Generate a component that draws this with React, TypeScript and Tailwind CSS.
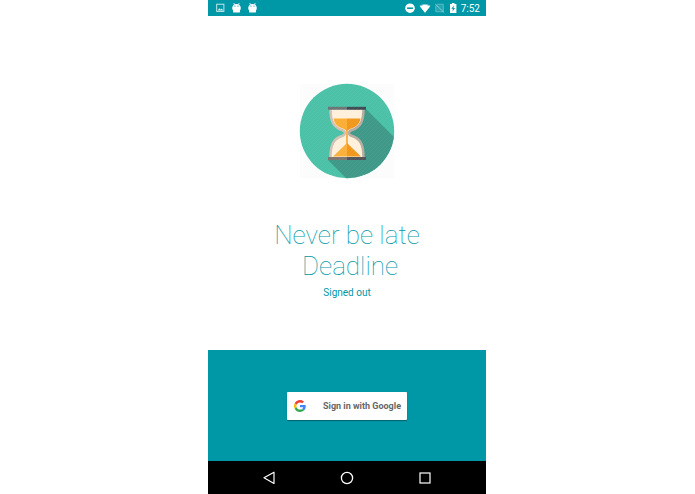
function StatusBar() {
  return (
    <header className="flex h-4 shrink-0 items-center bg-[#0097a7] pl-2 pr-1.5 text-white">
      <svg viewBox="0 0 48 12" className="h-3 w-12" aria-hidden="true">
        <rect x="0.7" y="2.2" width="7.2" height="7.2" fill="none" stroke="#d5eef1" strokeWidth="0.9" />
        <path d="M1.6 8.4L3.3 6.3L4.6 7.4L5.8 6.4L7.2 8.4Z" fill="#d5eef1" />
        {[16, 32].map((x) => (
          <g key={x} transform={`translate(${x} 0)`}>
            <path d="M1.6 1L3 2.8M7.4 1L6 2.8" stroke="#fff" strokeWidth="0.8" />
            <path
              d="M1 4.2C1 2.6 2.4 1.9 4.5 1.9C6.6 1.9 8 2.6 8 4.2L8.7 4.6V7.6L8 8V9.4C8 10.2 7.5 10.6 6.8 10.6H2.2C1.5 10.6 1 10.2 1 9.4V8L0.3 7.6V4.6Z"
              fill="#fff"
            />
            <circle cx="3" cy="4.1" r="0.6" fill="#0097a7" />
            <circle cx="6" cy="4.1" r="0.6" fill="#0097a7" />
          </g>
        ))}
      </svg>
      <svg viewBox="0 0 54 12" className="ml-auto h-3 w-[54px]" aria-hidden="true">
        <circle cx="6" cy="6.2" r="4.8" fill="#fff" />
        <rect x="3.1" y="5.4" width="5.8" height="1.6" fill="#0097a7" />
        <path d="M15.4 3.8C18.6 1.3 23.4 1.3 26.6 3.8L21 10.8Z" fill="#7cc9d2" />
        <path d="M16 4.6C19.2 2.4 22.8 2.4 26 4.6L21 10.8Z" fill="#fff" />
        <path d="M33.4 2.2H39.3V9.8H31.8V4Z" fill="#26a6b4" stroke="#5fbdc8" strokeWidth="0.9" />
        <path d="M31.2 2L40.2 10.6" stroke="#8ed0d8" strokeWidth="0.9" />
        <path d="M46 2.1H47.9V1H50.5V2.1H52.4V10.9H46Z" fill="#fff" />
        <path d="M49.9 3.4L47.3 6.8H48.9L48.5 9.4L51.1 5.9H49.5Z" fill="#0097a7" />
      </svg>
      <time className="ml-[3px] pt-px text-[10px] leading-4">7:52</time>
    </header>
  );
}

function HourglassLogo() {
  return (
    <svg viewBox="0 0 96 96" className="size-24" role="img" aria-label="Hourglass">
      <defs>
        <pattern id="stripes" width="4" height="4" patternUnits="userSpaceOnUse">
          <path d="M-1 1L1 -1M0 4L4 0M3 5L5 3" stroke="#fff" strokeOpacity="0.07" strokeWidth="0.7" />
        </pattern>
        <clipPath id="disc">
          <circle cx="48" cy="48" r="47.2" />
        </clipPath>
      </defs>
      <rect x="1" y="1" width="94" height="94" fill="#fcfcfc" />
      <g clipPath="url(#disc)">
        <rect width="96" height="96" fill="#4bc1a8" />
        <path d="M67 26L110 69V110H62L29 77L46 50Z" fill="#3f9988" />
        <path
          d="M32 26C32 38 35 44 44 47Q46 48 46 50Q46 52 44 53C35 56 32 62 32 74H64C64 62 61 56 52 53Q50 52 50 50Q50 48 52 47C61 44 64 38 64 26Z"
          fill="#fff0dc"
        />
        <path d="M34.5 35.5H48V48L44.5 45.8C38.5 44 35.5 41 34.5 35.5Z" fill="#fbae35" />
        <path d="M48 35.5H61.5C60.5 41 57.5 44 51.5 45.8L48 48Z" fill="#f0981d" />
        <path d="M47.2 46H48.8V61H47.2Z" fill="#f5a52b" />
        <path d="M48 60L34 73.5H48Z" fill="#fbb03b" />
        <path d="M48 60L62 73.5H48Z" fill="#f0981d" />
        <path
          d="M31.5 26C31.5 39 35 44.5 43 47Q46 48 46 50Q46 52 43 53C35 55.5 31.5 61 31.5 74"
          fill="none" stroke="#d0c2b4" strokeWidth="2.5"
        />
        <path
          d="M64.5 26C64.5 39 61 44.5 53 47Q50 48 50 50Q50 52 53 53C61 55.5 64.5 61 64.5 74"
          fill="none" stroke="#b8aca1" strokeWidth="2.5"
        />
        <rect x="29" y="23.8" width="19" height="3" fill="#6d7475" />
        <rect x="48" y="23.8" width="19" height="3" fill="#404c55" />
        <rect x="29" y="74" width="19" height="3" fill="#7d7771" />
        <rect x="48" y="74" width="19" height="3" fill="#50555b" />
        <rect width="96" height="96" fill="url(#stripes)" />
      </g>
    </svg>
  );
}

function GoogleMark() {
  return (
    <svg viewBox="0 0 48 48" className="size-3 shrink-0" aria-hidden="true">
      <path fill="#EA4335" d="M24 9.5c3.54 0 6.71 1.22 9.21 3.6l6.85-6.85C35.9 2.38 30.47 0 24 0 14.62 0 6.51 5.38 2.56 13.22l7.98 6.19C12.43 13.72 17.74 9.5 24 9.5z" />
      <path fill="#4285F4" d="M46.98 24.55c0-1.57-.15-3.09-.38-4.55H24v9.02h12.94c-.58 2.96-2.26 5.48-4.78 7.18l7.73 6c4.51-4.18 7.09-10.36 7.09-17.65z" />
      <path fill="#FBBC05" d="M10.53 28.59c-.48-1.45-.76-2.99-.76-4.59s.27-3.14.76-4.59l-7.98-6.19C.92 16.46 0 20.12 0 24c0 3.88.92 7.54 2.56 10.78l7.97-6.19z" />
      <path fill="#34A853" d="M24 48c6.48 0 11.93-2.13 15.89-5.81l-7.73-6c-2.15 1.45-4.92 2.3-8.16 2.3-6.26 0-11.57-4.22-13.47-9.91l-7.98 6.19C6.51 42.62 14.62 48 24 48z" />
    </svg>
  );
}

function NavigationBar() {
  return (
    <nav className="flex h-[33px] shrink-0 items-center justify-center gap-16 bg-black">
      <button type="button" aria-label="Back">
        <svg viewBox="0 0 14 14" className="size-3.5" fill="none" stroke="#fff" strokeWidth="1.2">
          <path d="M12 1.2V12.4L2 6.8Z" strokeLinejoin="round" />
        </svg>
      </button>
      <button type="button" aria-label="Home">
        <svg viewBox="0 0 14 14" className="size-3.5" fill="none" stroke="#fff" strokeWidth="1.3">
          <circle cx="7" cy="7" r="5.6" />
        </svg>
      </button>
      <button type="button" aria-label="Recent apps">
        <svg viewBox="0 0 14 14" className="size-3.5" fill="none" stroke="#fff" strokeWidth="1.2">
          <rect x="2" y="2" width="10" height="10" />
        </svg>
      </button>
    </nav>
  );
}

export default function App() {
  return (
    <div className="min-h-screen bg-white pr-px font-['Roboto',sans-serif]">
      <div className="mx-auto flex min-h-screen w-2/5 min-w-[278px] flex-col">
        <StatusBar />
        <main className="flex flex-1 flex-col items-center pt-[67px] text-[#0097a7]">
          <HourglassLogo />
          <h1 className="mt-[41px] whitespace-pre text-center text-[26px] font-thin leading-[31px]">
            {"Never be late\n Deadline"}
          </h1>
          <p className="mt-[3px] text-[10px] leading-4">Signed out</p>
        </main>
        <section className="flex h-[111px] shrink-0 items-center justify-center bg-[#0097a7]">
          <button
            type="button"
            className="flex h-7 w-[120px] items-center justify-between rounded-[1px] bg-white pl-[7px] pr-1.5 text-[9px] font-bold text-[#666] shadow-[0_1px_1px_rgba(0,0,0,0.35)]"
          >
            <GoogleMark />
            <span className="whitespace-nowrap leading-4">Sign in with Google</span>
          </button>
        </section>
        <NavigationBar />
      </div>
    </div>
  );
}
